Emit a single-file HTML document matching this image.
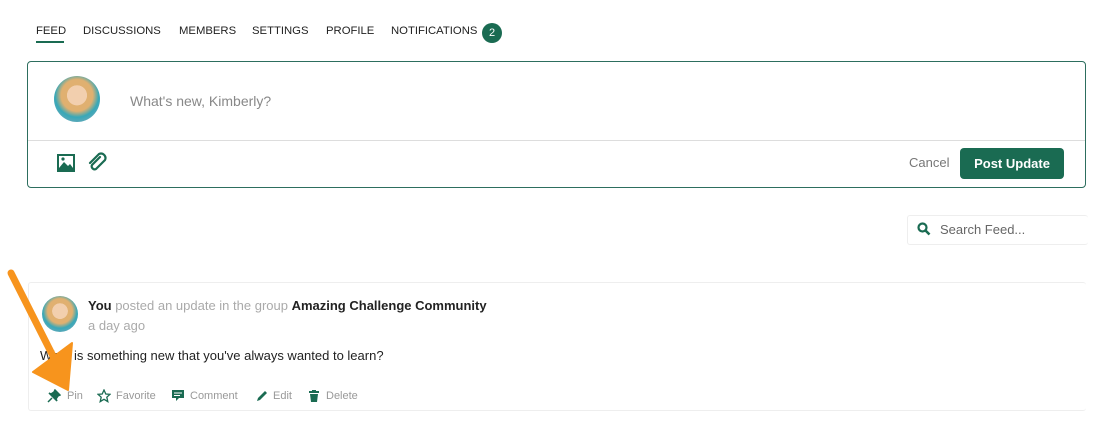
<!DOCTYPE html>
<html><head><style>
body{margin:0;width:1108px;height:425px;background:#fff;font-family:"Liberation Sans",sans-serif;position:relative;overflow:hidden;color:#222}
.a{position:absolute}
.nav{font-size:11.3px;color:#222;top:25px}
.act{font-size:11px;color:#999;top:390px}
</style></head><body>
<div class="a nav" style="left:36px">FEED</div>
<div class="a" style="left:36px;top:41px;width:28px;height:2px;background:#1a6b52"></div>
<div class="a nav" style="left:83px">DISCUSSIONS</div>
<div class="a nav" style="left:179px">MEMBERS</div>
<div class="a nav" style="left:252px">SETTINGS</div>
<div class="a nav" style="left:326px">PROFILE</div>
<div class="a nav" style="left:391px">NOTIFICATIONS</div>
<div class="a" style="left:482px;top:23px;width:20px;height:20px;border-radius:50%;background:#1a6b52;color:#fff;font-size:11px;text-align:center;line-height:20px">2</div>

<div class="a" style="left:27px;top:61px;width:1057px;height:125px;border:1px solid #2d6e5e;border-radius:4px"></div>
<div class="a" style="left:28px;top:140px;width:1057px;height:1px;background:#ddd"></div>
<div class="a" style="left:54px;top:76px;width:46px;height:46px;border-radius:50%;background:radial-gradient(circle at 50% 42%,#f2cfae 0 28%,#e0b070 29% 45%,#37a8b8 62%,#9ab 100%)"></div>
<div class="a" style="left:130px;top:93px;font-size:14px;color:#888">What's new, Kimberly?</div>
<svg class="a" style="left:56px;top:153px" width="20" height="20"><rect x="1" y="1" width="18" height="18" fill="#1a6b52"/><rect x="3" y="3" width="14" height="12" fill="#fff"/><path d="M3 15L8 9L12 13L14 11L17 15Z" fill="#1a6b52"/><circle cx="7" cy="6" r="1.6" fill="#1a6b52"/></svg>
<svg class="a" style="left:86px;top:152px" width="22" height="22"><path d="M14 5L6 13a3 3 0 0 0 4 4l9-9a4.5 4.5 0 0 0-6-6L4 11" fill="none" stroke="#1a6b52" stroke-width="2.2" stroke-linecap="round"/></svg>
<div class="a" style="left:909px;top:155px;font-size:13px;color:#777">Cancel</div>
<div class="a" style="left:960px;top:148px;width:104px;height:31px;border-radius:4px;background:#1a6b52;color:#fff;font-size:13px;font-weight:bold;text-align:center;line-height:31px">Post Update</div>

<div class="a" style="left:907px;top:215px;width:180px;height:28px;border:1px solid #eee;border-radius:3px;border-right:none"></div>
<svg class="a" style="left:917px;top:222px" width="14" height="14"><circle cx="5.5" cy="5.5" r="4" fill="none" stroke="#1a6b52" stroke-width="2.2"/><path d="M8.5 8.5L12.5 12.5" stroke="#1a6b52" stroke-width="2.6"/></svg>
<div class="a" style="left:940px;top:222px;font-size:13px;color:#666">Search Feed...</div>

<div class="a" style="left:28px;top:282px;width:1057px;height:127px;border:1px solid #eee;border-radius:3px;border-right:none"></div>
<div class="a" style="left:42px;top:296px;width:36px;height:36px;border-radius:50%;background:radial-gradient(circle at 50% 42%,#f2cfae 0 28%,#e0b070 29% 45%,#37a8b8 62%,#9ab 100%)"></div>
<div class="a" style="left:88px;top:298px;font-size:13px;color:#aaa"><b style="color:#222">You</b> posted an update in the group <b style="color:#222">Amazing Challenge Community</b></div>
<div class="a" style="left:88px;top:318px;font-size:13px;color:#aaa">a day ago</div>
<div class="a" style="left:40px;top:348px;font-size:13px;color:#222">What is something new that you've always wanted to learn?</div>

<svg class="a" style="left:47px;top:389px" width="14" height="14"><path d="M8 1L13 6L11 7L9 10L10 12L2 4L4 5L7 3Z M5 9L1 13" fill="#1a6b52" stroke="#1a6b52" stroke-width="1.5"/></svg>
<div class="a act" style="left:67px">Pin</div>
<svg class="a" style="left:97px;top:389px" width="14" height="14"><path d="M7 1L8.8 5L13 5.3L9.8 8.2L10.8 12.6L7 10.3L3.2 12.6L4.2 8.2L1 5.3L5.2 5Z" fill="none" stroke="#1a6b52" stroke-width="1.3"/></svg>
<div class="a act" style="left:116px">Favorite</div>
<svg class="a" style="left:171px;top:389px" width="14" height="14"><path d="M1 1H13V9H8L5 12V9H1Z" fill="#1a6b52"/><path d="M3 4H11M3 6.5H9" stroke="#fff" stroke-width="1"/></svg>
<div class="a act" style="left:190px">Comment</div>
<svg class="a" style="left:255px;top:389px" width="14" height="14"><path d="M2 12L3 9L10 2L12 4L5 11Z" fill="#1a6b52"/></svg>
<div class="a act" style="left:273px">Edit</div>
<svg class="a" style="left:307px;top:389px" width="14" height="14"><path d="M2 2H12V4H2Z M5 1H9V2H5Z M3 5H11L10 13H4Z" fill="#1a6b52"/></svg>
<div class="a act" style="left:326px">Delete</div>

<svg class="a" style="left:0;top:260px" width="100" height="140"><path d="M11 13L55 100" stroke="#f7941d" stroke-width="7" stroke-linecap="round"/><path d="M33 112L72 83L68 130Z" fill="#f7941d" stroke="#f7941d" stroke-width="2" stroke-linejoin="round"/></svg>
</body></html>
